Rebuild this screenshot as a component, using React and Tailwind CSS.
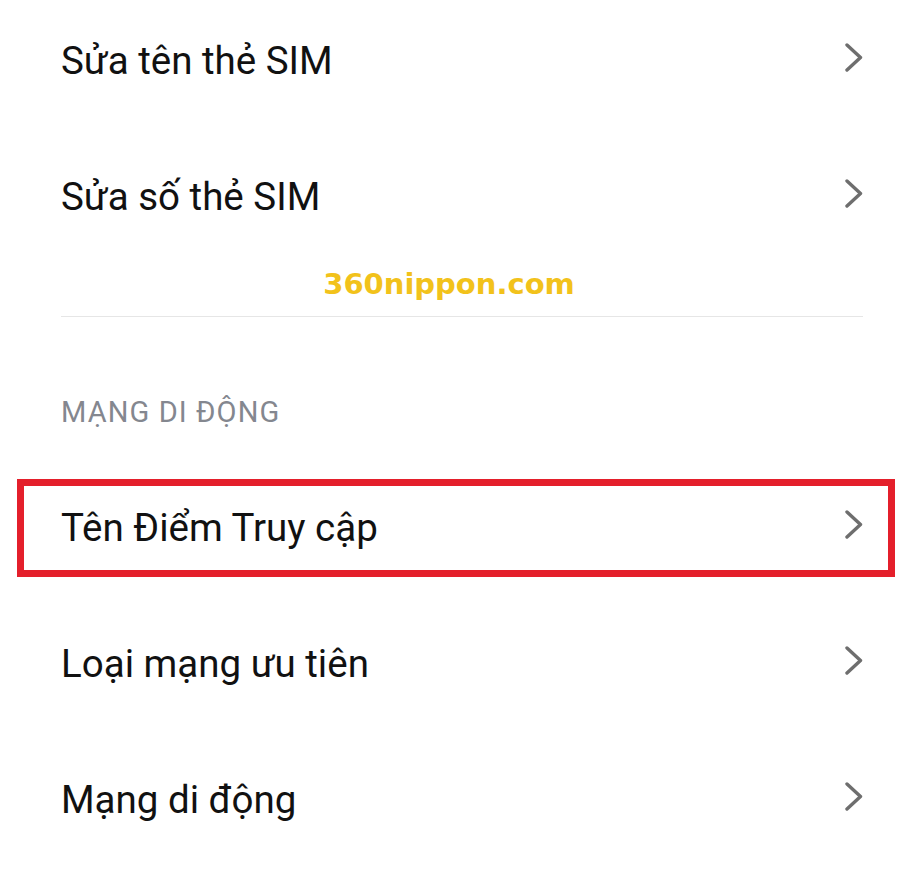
import React from "react";

const rows = ["Sửa tên thẻ SIM", "Sửa số thẻ SIM"];
const bottomRows = ["Loại mạng ưu tiên", "Mạng di động"];

function Chevron() {
  return (
    <svg width="18" height="29" viewBox="0 0 18 29" fill="none" className="shrink-0 -translate-y-[4px]">
      <polyline
        points="2,2 15.5,14.5 2,27"
        stroke="#6e6e6e"
        strokeWidth="3.4"
        strokeLinecap="round"
        strokeLinejoin="round"
      />
    </svg>
  );
}

function Row({ label }) {
  return (
    <div className="h-[136px] flex items-center justify-between px-[61px]">
      <span className="text-[38.5px] text-[#111111] leading-none">{label}</span>
      <Chevron />
    </div>
  );
}

export default function App() {
  return (
    <div
      className="w-[924px] h-[876px] bg-white overflow-hidden"
      style={{ fontFamily: "Roboto, 'Noto Sans', sans-serif" }}
    >
      <div className="-mt-[7px]">
        {rows.map((r) => (
          <Row key={r} label={r} />
        ))}

        {/* watermark */}
        <div className="h-[38px] flex items-center justify-center pr-[26px]">
          <span
            className="text-[29px] font-bold text-[#f2c21b] leading-none"
            style={{ fontFamily: "'DejaVu Sans', Verdana, sans-serif" }}
          >
            360nippon.com
          </span>
        </div>

        <div className="mt-[13px] mx-[61px] h-px bg-[#e6e6e6]" />

        {/* section header */}
        <div className="h-[143px] pt-[47px] flex items-center px-[61px]">
          <span className="text-[29px] tracking-[1.1px] text-[#84878f] leading-none">MẠNG DI ĐỘNG</span>
        </div>

        {/* highlighted row */}
        <div className="h-[136px] py-[19px] pl-[17px] pr-[29px]">
          <div className="h-full border-[7px] border-[#e41f2b] flex items-center justify-between pl-[37px] pr-[25px]">
            <span className="text-[38.5px] text-[#111111] leading-none">Tên Điểm Truy cập</span>
            <Chevron />
          </div>
        </div>

        {bottomRows.map((r) => (
          <Row key={r} label={r} />
        ))}
      </div>
    </div>
  );
}
